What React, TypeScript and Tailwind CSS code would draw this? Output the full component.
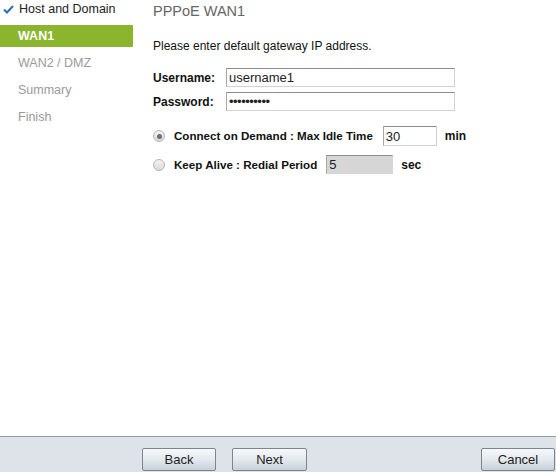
const font = { fontFamily: '"Liberation Sans", Arial, sans-serif' };

function Check() {
  return (
    <svg className="w-[11px] h-[9px]" viewBox="0 0 11 9">
      <path d="M1 4.5 L4 7.5 L10 1" fill="none" stroke="#2a6db5" strokeWidth="2" />
    </svg>
  );
}

function Radio({ checked }: { checked?: boolean }) {
  return (
    <span className="w-[12px] h-[12px] rounded-full border border-[#b5b5b5] bg-gradient-to-b from-[#f4f4f4] to-[#dadada] flex items-center justify-center shrink-0">
      {checked && <span className="w-[5px] h-[5px] rounded-full bg-[#6e6e6e]" />}
    </span>
  );
}

const inputCls =
  "h-[19px] border border-[#d2d2d2] border-t-[#8c8c8c] border-l-[#a9a9a9] px-[2px] text-[13px] text-[#222] outline-none";

function Button({ label }: { label: string }) {
  return (
    <button className="h-[23px] rounded-[2px] border border-[#7a8590] bg-gradient-to-b from-[#f7f9fb] via-[#e4e9ee] to-[#c8d1d9] text-[13px] text-[#222]">
      {label}
    </button>
  );
}

export default function App() {
  const steps = ["WAN2 / DMZ", "Summary", "Finish"];
  return (
    <div className="w-[556px] h-[472px] flex flex-col bg-white" style={font}>
      <div className="flex flex-1">
        <div className="w-[133px] shrink-0">
          <div className="h-[18px] flex items-center gap-[5px] pl-[3px] text-[12.5px] text-[#222]">
            <Check />
            <span>Host and Domain</span>
          </div>
          <div className="mt-[7px] h-[22px] flex items-center pl-[18px] bg-[#8cb52f] text-[12.5px] font-bold text-white">
            WAN1
          </div>
          {steps.map((s) => (
            <div key={s} className="mt-[5px] h-[22px] flex items-center pl-[18px] text-[12.5px] text-[#9a9a9a]">
              {s}
            </div>
          ))}
        </div>

        <div className="flex-1 pl-[20px] pt-[2px]">
          <h1 className="text-[14.5px] leading-[18px] text-[#666]">PPPoE WAN1</h1>
          <p className="mt-[19px] text-[12px] leading-[14px] text-[#111]">
            Please enter default gateway IP address.
          </p>

          <div className="mt-[15px] flex flex-col gap-[5px]">
            <div className="flex items-center">
              <label className="w-[73px] text-[12px] font-bold text-[#111]">Username:</label>
              <input className={`${inputCls} w-[229px]`} defaultValue="username1" readOnly />
            </div>
            <div className="flex items-center">
              <label className="w-[73px] text-[12px] font-bold text-[#111]">Password:</label>
              <input
                type="password"
                className={`${inputCls} w-[229px] text-[10px] tracking-[-0.5px]`}
                defaultValue="password12"
                readOnly
              />
            </div>
          </div>

          <div className="mt-[15px] flex flex-col gap-[9px] text-[11.6px] font-bold text-[#111]">
            <div className="flex items-center">
              <Radio checked />
              <span className="ml-[9px]">Connect on Demand : Max Idle Time</span>
              <input className={`${inputCls} ml-[10px] w-[54px] h-[20px] font-normal`} defaultValue="30" readOnly />
              <span className="ml-[8px] text-[12px]">min</span>
            </div>
            <div className="flex items-center">
              <Radio />
              <span className="ml-[9px]">Keep Alive : Redial Period</span>
              <input
                className={`${inputCls} ml-[9px] w-[67px] bg-[#d6d6d6] border-[#d6d6d6] font-normal`}
                defaultValue="5"
                readOnly
              />
              <span className="ml-[8px] text-[12px]">sec</span>
            </div>
          </div>
        </div>
      </div>

      <div className="h-[36px] border-t border-[#8f9ba6] bg-[#dde3e9] flex items-start pt-[11px]">
        <div className="ml-[142px] w-[74px] flex flex-col">
          <Button label="Back" />
        </div>
        <div className="ml-[16px] w-[75px] flex flex-col">
          <Button label="Next" />
        </div>
        <div className="ml-auto mr-[1px] w-[74px] flex flex-col">
          <Button label="Cancel" />
        </div>
      </div>
    </div>
  );
}
